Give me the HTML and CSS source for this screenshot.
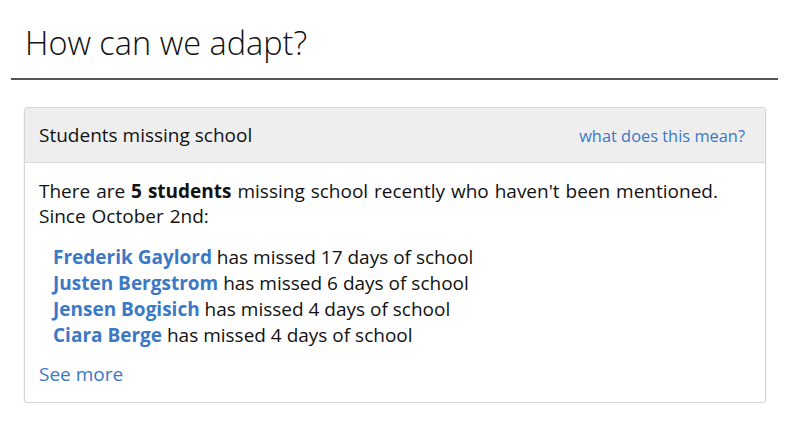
FILE: index.html
```html
<!DOCTYPE html>
<html>
<head>
<meta charset="utf-8">
<link rel="stylesheet" href="styles.css">
</head>
<body>
<div class="page">
  <h1 class="title">How can we adapt?</h1>
  <div class="panel">
    <div class="panel-head">
      <span class="panel-title">Students missing school</span>
      <a class="help" href="#">what does this mean?</a>
    </div>
    <div class="panel-body">
      <p class="intro">There are <b>5 students</b> missing school recently who haven't been mentioned.<br>Since October 2nd:</p>
      <ul class="list">
        <li><a class="name" href="#">Frederik Gaylord</a> has missed 17 days of school</li>
        <li><a class="name" href="#">Justen Bergstrom</a> has missed 6 days of school</li>
        <li><a class="name" href="#">Jensen Bogisich</a> has missed 4 days of school</li>
        <li><a class="name" href="#">Ciara Berge</a> has missed 4 days of school</li>
      </ul>
      <a class="more" href="#">See more</a>
    </div>
  </div>
</div>
</body>
</html>
```

FILE: styles.css
```css
html, body {
  margin: 0;
  padding: 0;
  background: #fff;
}
body {
  font-family: "Open Sans", sans-serif;
  color: #111;
}
.page {
  padding: 20px 22px 0 11px;
}
.title {
  margin: 0;
  padding: 0 0 12px 14px;
  font-weight: 300;
  font-size: 32.5px;
  line-height: 46px;
  border-bottom: 2px solid #555;
}
.panel {
  margin: 27px 12px 0 13px;
  border: 1px solid #d4d4d4;
  border-radius: 3px;
  box-shadow: 0 1px 2px rgba(0,0,0,0.12);
}
.panel-head {
  display: flex;
  justify-content: space-between;
  align-items: center;
  height: 54px;
  padding: 0 20px 0 14px;
  background: #eeeeee;
  border-bottom: 1px solid #d8d8d8;
}
.panel-title {
  font-size: 19px;
}
.help {
  font-size: 16.4px;
  color: #3b78c7;
  text-decoration: none;
}
.panel-body {
  padding: 16px 14px 15px 14px;
  font-size: 19px;
}
.intro {
  margin: 0;
  line-height: 25px;
  word-spacing: 1px;
}
.list {
  list-style: none;
  margin: 15px 0 0 0;
  padding: 0 0 0 14px;
  line-height: 26px;
}
.name {
  color: #3b78c7;
  font-weight: 700;
  text-decoration: none;
}
.more {
  display: inline-block;
  margin-top: 13px;
  color: #3b78c7;
  text-decoration: none;
  line-height: 26px;
}
```
